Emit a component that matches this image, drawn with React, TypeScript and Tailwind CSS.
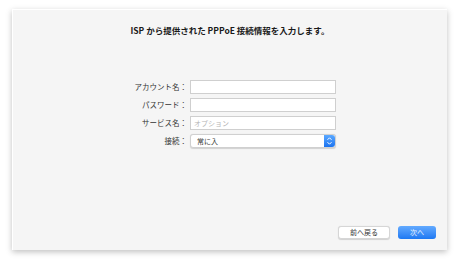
import React from "react";

const fields = [
  { label: "アカウント名：", placeholder: "" },
  { label: "パスワード：", placeholder: "" },
  { label: "サービス名：", placeholder: "オプション" },
];

function Stepper() {
  return (
    <div className="flex h-full w-[11px] items-center justify-center rounded-r-[3px] bg-gradient-to-b from-[#5aa8ff] to-[#1a73f0]">
      <svg width="7" height="10" viewBox="0 0 7 10" fill="none">
        <path d="M1.5 3.8 L3.5 1.8 L5.5 3.8" stroke="white" strokeWidth="1" />
        <path d="M1.5 6.2 L3.5 8.2 L5.5 6.2" stroke="white" strokeWidth="1" />
      </svg>
    </div>
  );
}

export default function App() {
  return (
    <div
      className="h-[264px] w-[460px] bg-white pl-[12px] pt-[9px]"
      style={{ fontFamily: '"Noto Sans CJK JP", "Liberation Sans", sans-serif' }}>
      <div className="flex h-[241px] w-[435px] flex-col border-l border-t border-white bg-[#f5f5f5] shadow-[0_2px_6px_rgba(0,0,0,0.25)]">
        <h1 className="pt-[14px] text-center text-[8.5px] font-bold leading-[12px] text-[#1a1a1a]">
          ISP から提供された PPPoE 接続情報を入力します。
        </h1>

        <div className="mt-[44px] flex flex-col gap-[4px]">
          {fields.map((f, i) => (
            <div key={i} className="flex h-[14px] items-center">
              <label className="w-[177px] pr-[3px] text-right text-[7.5px] text-[#333]">
                {f.label}
              </label>
              <input
                className="h-[14px] w-[146px] border border-[#cfcfcf] bg-white px-[3px] text-[7px] text-[#333] outline-none placeholder:text-[#b5b5b5]"
                placeholder={f.placeholder}
              />
            </div>
          ))}
          <div className="flex h-[14px] items-center">
            <label className="w-[177px] pr-[3px] text-right text-[7.5px] text-[#333]">
              接続：
            </label>
            <div className="flex h-[14px] w-[146px] items-center rounded-[3px] border border-[#d0d0d0] bg-white shadow-[0_0.5px_1px_rgba(0,0,0,0.15)]">
              <span className="flex-1 pl-[6px] text-[7px] text-[#333]">常に入</span>
              <Stepper />
            </div>
          </div>
        </div>

        <div className="mt-auto flex justify-end gap-[8px] pb-[11px] pr-[11px]">
          <button className="h-[13px] w-[52px] rounded-[3px] border border-[#d6d6d6] bg-white text-[7px] leading-none text-[#333] shadow-[0_0.5px_1px_rgba(0,0,0,0.15)]">
            前へ戻る
          </button>
          <button className="h-[13px] w-[38px] rounded-[3px] bg-gradient-to-b from-[#62aaff] to-[#1c78f2] text-[7px] leading-none text-white/90">
            次へ
          </button>
        </div>
      </div>
    </div>
  );
}
